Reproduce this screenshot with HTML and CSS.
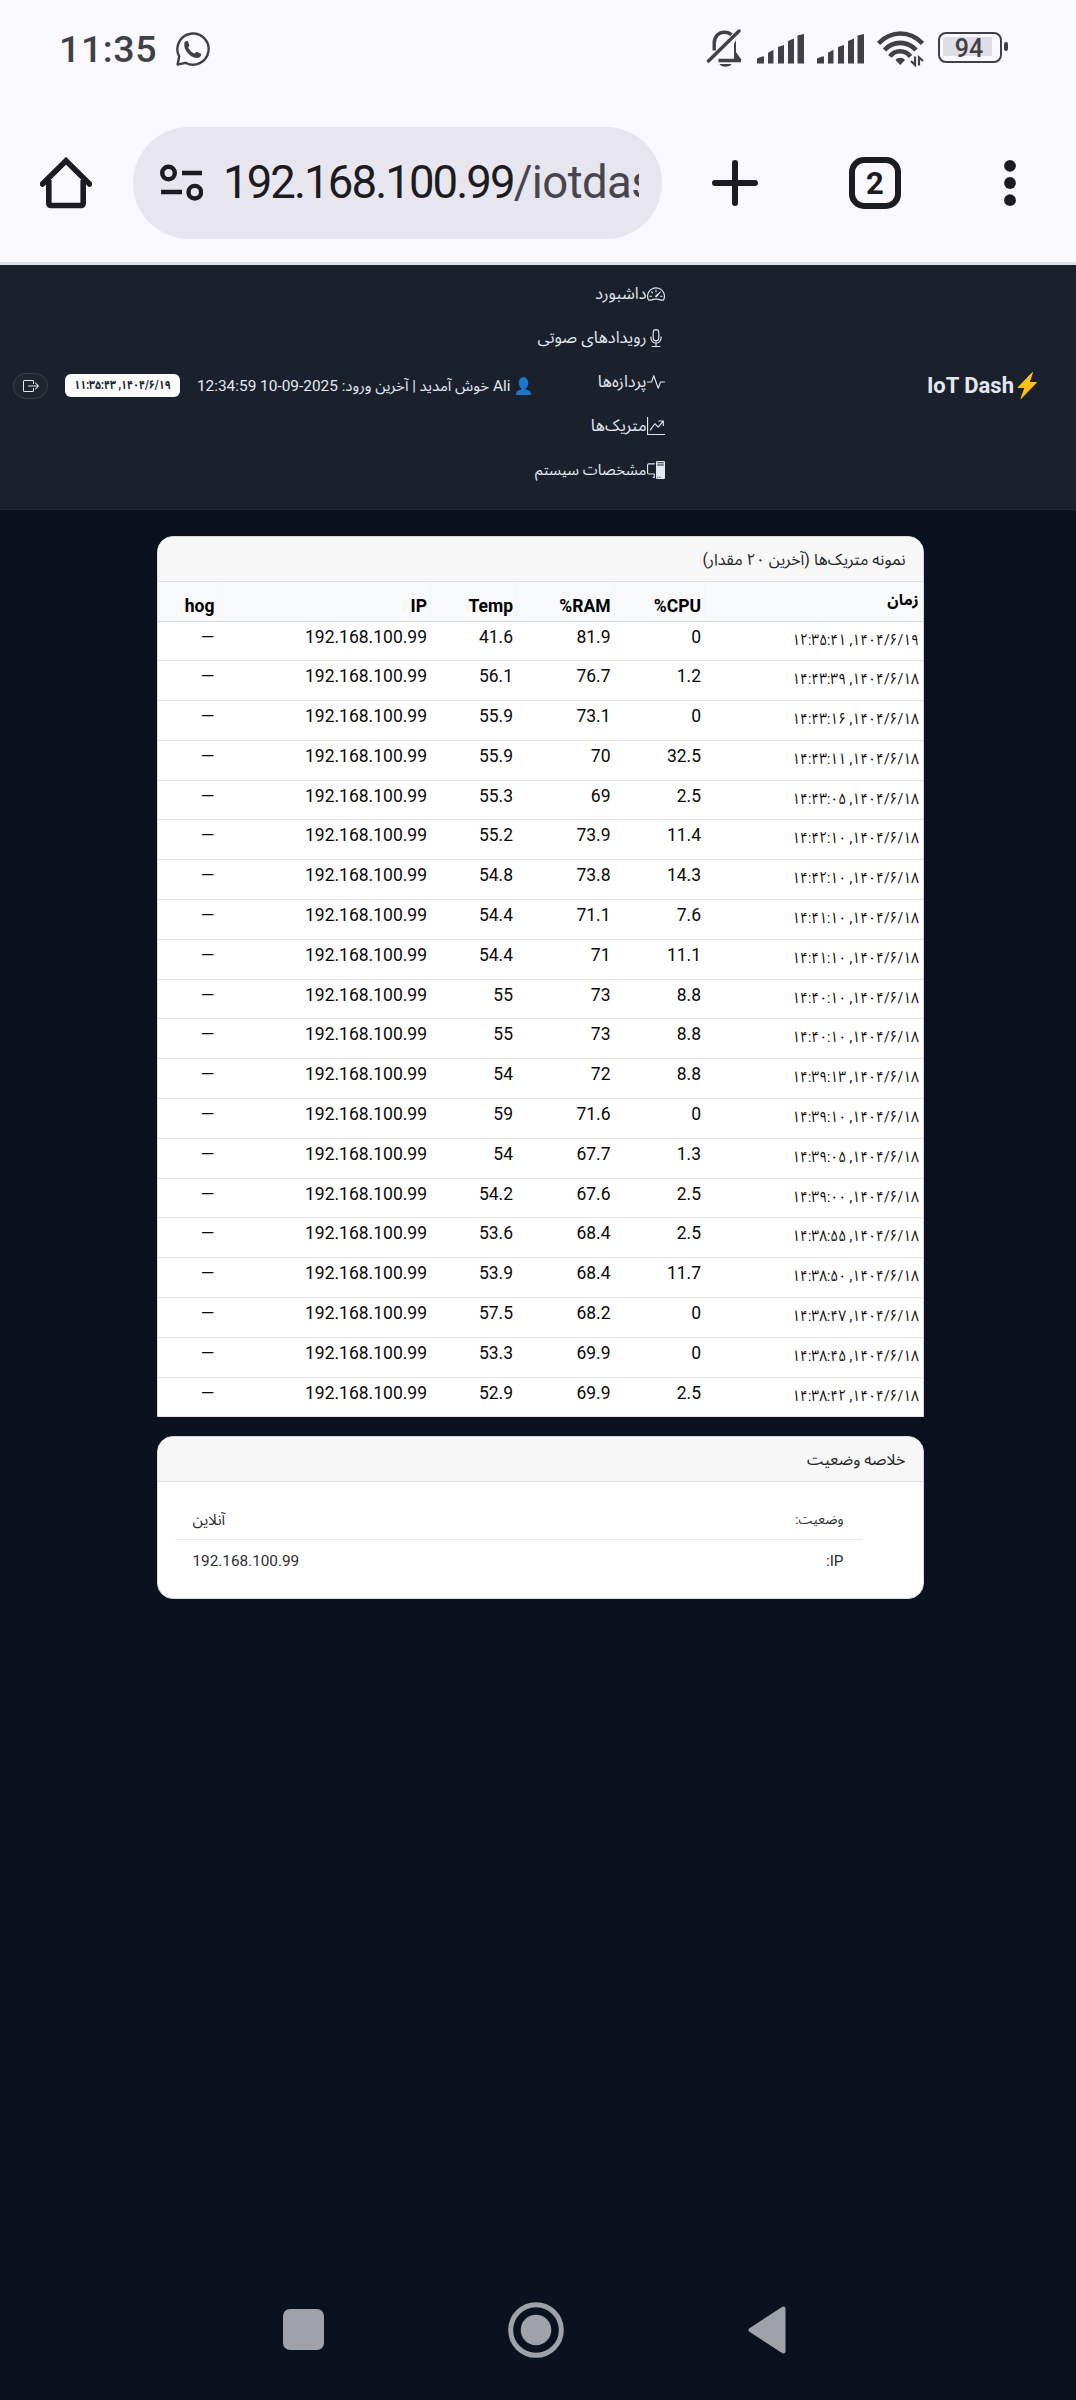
FILE: index.html
```html
<!DOCTYPE html>
<html lang="fa">
<head>
<meta charset="utf-8">
<title>IoT Dash</title>
<link rel="stylesheet" href="styles.css">
</head>
<body>
<div class="status">
  <span class="clock">11:35</span>
  <svg class="i-wa" width="36" height="36" viewBox="0 0 36 36" fill="none"><path d="M2.600 33.600l1.600-8.200A15.600 15.600 0 1 1 10.500 31.800z" stroke="#404045" stroke-width="2.400" stroke-linejoin="round"/><path d="M9.300 12.300c.5-1.700 2-2.700 3.600-2l1.600 4.100-1.300 2.100c1.500 3 3.300 4.700 6.200 6l2.100-1.700 4.600 2c.3 2-1 3.600-3 4.200C16 27.500 8.300 19.500 9.300 12.300z" fill="#404045"/></svg>
  <span class="fill"></span>
  <svg class="i-bell" width="38" height="40" viewBox="0 0 38 40" fill="none" stroke="#404045" stroke-width="3.400"><path d="M8.200 21.500V14.500C8.200 7 13 3.200 18.500 3.200c2.900 0 5.300 1 7 2.600M12.500 31.500H35" /><path d="M28 15l2-4v12l5.500 8H28z" fill="#404045" stroke="none"/><path d="M2.500 32L33 2" stroke-linecap="round"/><path d="M13.500 35h12c-1.500 3.500-10.500 3.500-12 0z" fill="#404045" stroke="none"/></svg>
  <svg class="i-sig" width="47" height="30" viewBox="0 0 47 30" fill="#404045"><path d="M0 29.500V24.500L5 22.500h2v7zM11 29.500V18.800l5.500-3v13.700zM21 29.500V13l6-2v18.500zM31 29.500V7l6-2.500v25zM40.500 29.500V1.500L47 0v29.500z"/></svg>
  <svg class="i-sig" width="47" height="30" viewBox="0 0 47 30" fill="#404045"><path d="M0 29.500V24.500L5 22.500h2v7zM11 29.500V18.800l5.500-3v13.700zM21 29.500V13l6-2v18.500zM31 29.500V7l6-2.500v25zM40.500 29.500V1.500L47 0v29.500z"/></svg>
  <svg class="i-wifi" width="47" height="36" viewBox="0 0 47 36" fill="none" stroke="#404045" stroke-width="4.600"><path d="M1.500 12.500C14-.8 33-.8 45.500 12.500M7.500 19c9-9.500 22.500-9.500 31.500 0M13 25.500c5-7 15-7 20.500 0"/><path d="M18.500 29c2-3 7.500-3 9.500 0l-4.700 5z" fill="#404045" stroke="none"/><path d="M38 25.500v8.500l-4-4M42 34.500v-8l4 3.500" stroke-width="2.200"/></svg>
  <span class="battery"><span class="level">94</span></span>
</div>
<div class="toolbar">
  <svg class="i-home" width="52" height="52" viewBox="0 0 52 52" fill="none" stroke="#1b1b21" stroke-width="5.600"><path d="M2.500 27L26 3.800 49.500 27" stroke-linejoin="miter" stroke-linecap="round"/><path d="M8.800 23v23.500a2 2 0 0 0 2 2h30.400a2 2 0 0 0 2-2V23"/></svg>
  <div class="omnibox">
    <svg width="43" height="38" viewBox="0 0 43 38" fill="none" stroke="#1b1b21"><circle cx="8.500" cy="9" r="6.300" stroke-width="4.400"/><path d="M22 9h20M1 28h21" stroke-width="4.600"/><circle cx="34.800" cy="28.200" r="6.300" stroke-width="4.400"/></svg>
    <span class="url" dir="ltr">192.168.100.99<span class="path">/iotdas</span></span>
  </div>
  <svg class="i-plus" width="46" height="46" viewBox="0 0 46 46" stroke="#1b1b21" stroke-width="6" stroke-linecap="round"><path d="M23 3v40M3 23h40"/></svg>
  <span class="tabs">2</span>
  <svg class="i-dots" width="12" height="48" viewBox="0 0 12 48" fill="#1b1b21"><circle cx="6" cy="6.800" r="5.900"/><circle cx="6" cy="24" r="5.900"/><circle cx="6" cy="41.200" r="5.900"/></svg>
</div>

<header class="navbar" dir="rtl">
  <div class="brand"><svg width="20" height="27" viewBox="0 0 20 27"><path d="M15.500.5L1 15.500h7L4 26.500 19.500 10.500h-7.300z" fill="#fdc014" stroke="#fdc014" stroke-linejoin="round"/></svg><span>IoT Dash</span></div>
  <nav class="menu">
    <a><svg viewBox="0 0 16 16"><path d="M8 4a.5.5 0 0 1 .5.5V6a.5.5 0 0 1-1 0V4.500A.5.5 0 0 1 8 4M3.732 5.732a.5.5 0 0 1 .707 0l.915.914a.5.5 0 1 1-.708.708l-.914-.915a.5.5 0 0 1 0-.707M2 10a.5.5 0 0 1 .5-.5h1.586a.5.5 0 0 1 0 1H2.500A.5.5 0 0 1 2 10m9.500 0a.5.5 0 0 1 .5-.5h1.500a.5.5 0 0 1 0 1H12a.5.5 0 0 1-.5-.5m.754-4.246a.39.39 0 0 0-.527-.02L7.547 9.310a.91.91 0 1 0 1.302 1.258l3.434-4.297a.39.39 0 0 0-.029-.518z"/><path fill-rule="evenodd" d="M0 10a8 8 0 1 1 15.547 2.661c-.442 1.253-1.845 1.602-2.932 1.250C11.309 13.488 9.475 13 8 13c-1.474 0-3.310.488-4.615.911-1.087.352-2.490.003-2.932-1.250A8 8 0 0 1 0 10m8-7a7 7 0 0 0-6.603 9.329c.203.575.923.876 1.680.63C4.397 12.533 6.358 12 8 12s3.604.532 4.923.96c.757.245 1.477-.056 1.680-.631A7 7 0 0 0 8 3"/></svg><span>داشبورد</span></a>
    <a><svg viewBox="0 0 16 16"><path d="M3.500 6.500A.5.5 0 0 1 4 7v1a4 4 0 0 0 8 0V7a.5.5 0 0 1 1 0v1a5 5 0 0 1-4.500 4.975V15h3a.5.5 0 0 1 0 1h-7a.5.5 0 0 1 0-1h3v-2.025A5 5 0 0 1 3 8V7a.5.5 0 0 1 .5-.5"/><path d="M10 8a2 2 0 1 1-4 0V3a2 2 0 1 1 4 0zM8 0a3 3 0 0 0-3 3v5a3 3 0 0 0 6 0V3a3 3 0 0 0-3-3"/></svg><span>رویدادهای صوتی</span></a>
    <a><svg viewBox="0 0 16 16"><path fill-rule="evenodd" d="M6 2a.5.5 0 0 1 .47.33L10 12.036l1.530-4.208A.5.5 0 0 1 12 7.500h3.500a.5.5 0 0 1 0 1h-3.150l-1.880 5.170a.5.5 0 0 1-.94 0L6 3.964 4.470 8.171A.5.5 0 0 1 4 8.500H.5a.5.5 0 0 1 0-1h3.150l1.880-5.170A.5.5 0 0 1 6 2"/></svg><span>پردازه‌ها</span></a>
    <a><svg viewBox="0 0 16 16"><path fill-rule="evenodd" d="M0 0h1v15h15v1H0zm10 3.500a.5.5 0 0 1 .5-.5h4a.5.5 0 0 1 .5.5v4a.5.5 0 0 1-1 0V4.900l-3.613 4.417a.5.5 0 0 1-.74.037L7.060 6.767l-3.656 5.027a.5.5 0 0 1-.808-.588l4-5.500a.5.5 0 0 1 .758-.06l2.609 2.610L13.445 4H10.500a.5.5 0 0 1-.5-.5"/></svg><span>متریک‌ها</span></a>
    <a><svg viewBox="0 0 16 16"><path d="M8 1a1 1 0 0 1 1-1h6a1 1 0 0 1 1 1v14a1 1 0 0 1-1 1H9a1 1 0 0 1-1-1zm1 13.500a.5.5 0 1 0 1 0 .5.5 0 0 0-1 0m2 0a.5.5 0 1 0 1 0 .5.5 0 0 0-1 0M9.500 1a.5.5 0 0 0 0 1h5a.5.5 0 0 0 0-1zM9 3.500a.5.5 0 0 0 .5.5h5a.5.5 0 0 0 0-1h-5a.5.5 0 0 0-.5.5M1.500 2A1.500 1.500 0 0 0 0 3.500v7A1.500 1.500 0 0 0 1.500 12H6v2h-.5a.5.5 0 0 0 0 1H7v-4H1.500a.5.5 0 0 1-.5-.5v-7a.5.5 0 0 1 .5-.5H7V2z"/></svg><span>مشخصات سیستم</span></a>
  </nav>
  <div class="user">
    <svg width="15" height="18" viewBox="0 0 15 18" fill="#1c78cf"><ellipse cx="7.500" cy="6" rx="4.800" ry="6"/><path d="M5.300 9h4.400v3.500c3 .4 5.300 2 5.300 5.500H0c0-3.500 2.300-5.100 5.300-5.500z"/></svg>
    <span class="welcome">Ali <span class="fa">خوش آمدید | آخرین ورود:</span> 2025-09-10 12:34:59</span>
  </div>
  <div class="now"><span>۱۴۰۴/۶/۱۹, ۱۱:۳۵:۴۳</span></div>
  <a class="logout"><svg width="16" height="16" viewBox="0 0 16 16" fill="#e2e8f0"><path d="M10 12.500a.5.5 0 0 1-.5.5h-8a.5.5 0 0 1-.5-.5v-9a.5.5 0 0 1 .5-.5h8a.5.5 0 0 1 .5.5v2a.5.5 0 0 0 1 0v-2A1.500 1.500 0 0 0 9.500 2h-8A1.500 1.500 0 0 0 0 3.500v9A1.500 1.500 0 0 0 1.500 14h8a1.500 1.500 0 0 0 1.500-1.500v-2a.5.5 0 0 0-1 0z"/><path d="M15.854 8.354a.5.5 0 0 0 0-.708l-3-3a.5.5 0 0 0-.708.708L14.293 7.500H5.500a.5.5 0 0 0 0 1h8.793l-2.147 2.146a.5.5 0 0 0 .708.708z"/></svg></a>
</header>

<main class="content" dir="rtl">
  <section class="card metrics">
    <h2>نمونه متریک‌ها (آخرین ۲۰ مقدار)</h2>
    <table>
      <thead><tr><th class="time">زمان</th><th>CPU%</th><th>RAM%</th><th>Temp</th><th>IP</th><th>hog</th></tr></thead>
      <tbody>
        <tr><td class="time">۱۴۰۴/۶/۱۹, ۱۲:۳۵:۴۱</td><td>0</td><td>81.9</td><td>41.6</td><td>192.168.100.99</td><td>—</td></tr>
        <tr><td class="time">۱۴۰۴/۶/۱۸, ۱۴:۴۳:۳۹</td><td>1.2</td><td>76.7</td><td>56.1</td><td>192.168.100.99</td><td>—</td></tr>
        <tr><td class="time">۱۴۰۴/۶/۱۸, ۱۴:۴۳:۱۶</td><td>0</td><td>73.1</td><td>55.9</td><td>192.168.100.99</td><td>—</td></tr>
        <tr><td class="time">۱۴۰۴/۶/۱۸, ۱۴:۴۳:۱۱</td><td>32.5</td><td>70</td><td>55.9</td><td>192.168.100.99</td><td>—</td></tr>
        <tr><td class="time">۱۴۰۴/۶/۱۸, ۱۴:۴۳:۰۵</td><td>2.5</td><td>69</td><td>55.3</td><td>192.168.100.99</td><td>—</td></tr>
        <tr><td class="time">۱۴۰۴/۶/۱۸, ۱۴:۴۲:۱۰</td><td>11.4</td><td>73.9</td><td>55.2</td><td>192.168.100.99</td><td>—</td></tr>
        <tr><td class="time">۱۴۰۴/۶/۱۸, ۱۴:۴۲:۱۰</td><td>14.3</td><td>73.8</td><td>54.8</td><td>192.168.100.99</td><td>—</td></tr>
        <tr><td class="time">۱۴۰۴/۶/۱۸, ۱۴:۴۱:۱۰</td><td>7.6</td><td>71.1</td><td>54.4</td><td>192.168.100.99</td><td>—</td></tr>
        <tr><td class="time">۱۴۰۴/۶/۱۸, ۱۴:۴۱:۱۰</td><td>11.1</td><td>71</td><td>54.4</td><td>192.168.100.99</td><td>—</td></tr>
        <tr><td class="time">۱۴۰۴/۶/۱۸, ۱۴:۴۰:۱۰</td><td>8.8</td><td>73</td><td>55</td><td>192.168.100.99</td><td>—</td></tr>
        <tr><td class="time">۱۴۰۴/۶/۱۸, ۱۴:۴۰:۱۰</td><td>8.8</td><td>73</td><td>55</td><td>192.168.100.99</td><td>—</td></tr>
        <tr><td class="time">۱۴۰۴/۶/۱۸, ۱۴:۳۹:۱۳</td><td>8.8</td><td>72</td><td>54</td><td>192.168.100.99</td><td>—</td></tr>
        <tr><td class="time">۱۴۰۴/۶/۱۸, ۱۴:۳۹:۱۰</td><td>0</td><td>71.6</td><td>59</td><td>192.168.100.99</td><td>—</td></tr>
        <tr><td class="time">۱۴۰۴/۶/۱۸, ۱۴:۳۹:۰۵</td><td>1.3</td><td>67.7</td><td>54</td><td>192.168.100.99</td><td>—</td></tr>
        <tr><td class="time">۱۴۰۴/۶/۱۸, ۱۴:۳۹:۰۰</td><td>2.5</td><td>67.6</td><td>54.2</td><td>192.168.100.99</td><td>—</td></tr>
        <tr><td class="time">۱۴۰۴/۶/۱۸, ۱۴:۳۸:۵۵</td><td>2.5</td><td>68.4</td><td>53.6</td><td>192.168.100.99</td><td>—</td></tr>
        <tr><td class="time">۱۴۰۴/۶/۱۸, ۱۴:۳۸:۵۰</td><td>11.7</td><td>68.4</td><td>53.9</td><td>192.168.100.99</td><td>—</td></tr>
        <tr><td class="time">۱۴۰۴/۶/۱۸, ۱۴:۳۸:۴۷</td><td>0</td><td>68.2</td><td>57.5</td><td>192.168.100.99</td><td>—</td></tr>
        <tr><td class="time">۱۴۰۴/۶/۱۸, ۱۴:۳۸:۴۵</td><td>0</td><td>69.9</td><td>53.3</td><td>192.168.100.99</td><td>—</td></tr>
        <tr><td class="time">۱۴۰۴/۶/۱۸, ۱۴:۳۸:۴۲</td><td>2.5</td><td>69.9</td><td>52.9</td><td>192.168.100.99</td><td>—</td></tr>
      </tbody>
    </table>
  </section>
  <section class="card summary">
    <h2>خلاصه وضعیت</h2>
    <ul>
      <li><span class="label">وضعیت:</span><span>آنلاین</span></li>
      <li><span>IP:</span><span>192.168.100.99</span></li>
    </ul>
  </section>
</main>

<footer class="sysnav">
  <svg width="41" height="41" viewBox="0 0 41 41"><rect width="41" height="41" rx="7" fill="#9fa2a8"/></svg>
  <svg width="56" height="56" viewBox="0 0 56 56"><circle cx="28" cy="28" r="25.300" fill="none" stroke="#9fa2a8" stroke-width="5"/><circle cx="28" cy="28" r="15.300" fill="#9fa2a8"/></svg>
  <svg width="38" height="48" viewBox="0 0 38 48"><path d="M2.500 24L35.500 2.500v43z" fill="#9fa2a8" stroke="#9fa2a8" stroke-width="4" stroke-linejoin="round"/></svg>
</footer>
</body>
</html>
```
FILE: styles.css
```css
* { box-sizing: border-box; }
body {
  margin: 0;
  width: 1076px;
  height: 2400px;
  display: flex;
  flex-direction: column;
  background: #0a121f;
  font-family: Roboto, "Noto Sans Arabic", "DejaVu Sans", sans-serif;
  overflow: hidden;
}
svg { display: block; flex: none; }

/* phone status bar */
.status {
  height: 97px;
  padding: 0 74px 0 59px;
  display: flex;
  align-items: center;
  background: #f9f8ff;
  color: #404045;
}
.clock { width: 116px; font-size: 37.500px; font-weight: 500; line-height: 44px; letter-spacing: .6px; padding-top: 1px; }
.fill { flex: 1; }
.i-bell { margin-right: 13px; }
.i-sig { margin-right: 13px; }
.battery {
  width: 64px;
  height: 31px;
  margin: -2px 0 0 14px;
  padding: 3px;
  border: 2.500px solid #404045;
  border-radius: 8px;
  position: relative;
}
.battery::after {
  content: "";
  position: absolute;
  right: -8px;
  top: 8px;
  width: 4px;
  height: 9px;
  border-radius: 2px;
  background: #404045;
}
.level {
  display: block;
  width: 49px;
  height: 19px;
  background: #e0dee5;
  font-size: 25px;
  font-weight: 500;
  line-height: 24px;
  text-align: center;
  padding-left: 3px;
}

/* browser toolbar */
.toolbar {
  height: 168px;
  padding: 0 60px 0 40px;
  display: flex;
  align-items: center;
  background: #f9f8ff;
  border-bottom: 3px solid #e0e1e8;
}
.toolbar > * { margin-top: 6px; }
.omnibox {
  width: 529px;
  height: 112px;
  margin-left: 41px;
  padding: 0 23px 0 27px;
  border-radius: 56px;
  background: #e7e5ee;
  display: flex;
  align-items: center;
}
.url {
  flex: 1;
  margin-left: 20px;
  overflow: hidden;
  white-space: nowrap;
  font-size: 45.500px;
  line-height: 60px;
  letter-spacing: -1.900px;
  color: #1b1b21;
}
.path { color: #47464f; letter-spacing: -.6px; }
.i-plus { margin-left: 50px; }
.tabs {
  width: 52px;
  height: 52px;
  margin: 6px 103px 0 91px;
  border: 6px solid #1b1b21;
  border-radius: 15px;
  font-size: 31px;
  font-weight: 700;
  line-height: 41px;
  text-align: center;
  color: #1b1b21;
}

/* site header */
.navbar {
  height: 245px;
  padding: 0 39px 3px 13px;
  display: flex;
  align-items: center;
  background: #1a202c;
  border-bottom: 1px solid #252b36;
  color: #e2e8f0;
}
.brand { display: flex; align-items: center; gap: 3px; width: 372.500px; font-size: 22px; font-weight: 700; }
.menu { width: 134px; padding-bottom: 8px; display: flex; flex-direction: column; }
.menu a { height: 44px; display: flex; align-items: center; font-size: 16.400px; white-space: nowrap; }
.menu a:last-child { font-size: 15px; }
.menu svg { width: 18px; height: 18px; fill: #e2e8f0; }
.user { width: 351px; display: flex; align-items: center; gap: 5px; font-size: 15.400px; white-space: nowrap; }
.user .fa { font-size: 15px; }
.now {
  width: 115px;
  height: 23px;
  border-radius: 6px;
  background: #f8fafc;
  color: #212529;
  font-size: 12px;
  font-weight: 700;
  line-height: 23px;
  display: flex;
  justify-content: center;
  white-space: nowrap;
}
.now span { transform: scaleX(.87); }
.logout {
  width: 35px;
  height: 26px;
  margin-right: auto;
  border: 1px solid #3a404b;
  border-radius: 13px;
  background: #20262f;
  display: flex;
  align-items: center;
  justify-content: center;
}

/* cards */
.content { flex: 1; padding: 26px 152.500px 0 156.500px; }
.card { background: #fff; border: 1px solid #d5d8dc; }
.card h2 {
  margin: 0;
  height: 45px;
  padding-right: 17px;
  border-bottom: 1px solid #dedfe1;
  border-radius: 15px 15px 0 0;
  background: #f7f7f7;
  color: #212529;
  font-size: 16px;
  font-weight: 400;
  line-height: 45px;
}
.metrics { height: 881px; border-radius: 16px 16px 0 0; }
table, thead, tbody { display: block; }
tr {
  height: 39.800px;
  display: grid;
  grid-template-columns: 217.500px 90.500px 97.500px 86px 212.500px 1fr;
  border-bottom: 1px solid #e4e5e7;
}
thead tr { height: 39.500px; background: #f8f9fb; border-bottom: 1px solid #d3d5d8; }
th, td {
  padding: 3px 4px 0 0;
  font-size: 17.500px;
  line-height: 24px;
  text-align: right;
  white-space: nowrap;
  color: #0a0a0a;
}
th { padding-top: 12px; font-weight: 700; color: #000; }
th + th { border-right: 1px solid #f3f5f7; padding-right: 3px; }
td.time { font-size: 15.500px; padding-top: 6px; transform: scaleX(.89); transform-origin: right; }
th.time { font-size: 15.500px; padding-top: 6px; }
.summary { height: 163.500px; margin-top: 18.500px; border-radius: 16px; }
.summary ul { list-style: none; margin: 0; padding: 19px 61px 0 17px; }
.summary li {
  height: 39.500px;
  padding: 0 18px;
  display: flex;
  justify-content: space-between;
  align-items: center;
  font-size: 15.300px;
  color: #2c2f33;
}
.summary li:first-child { border-bottom: 1px solid #ececee; }
.summary li + li { padding-top: 2px; }
.summary .label { font-size: 13.500px; }

/* system buttons */
.sysnav { height: 141px; display: flex; align-items: center; padding-left: 283px; }
.sysnav svg:nth-child(2) { margin: 0 184px; }
```
